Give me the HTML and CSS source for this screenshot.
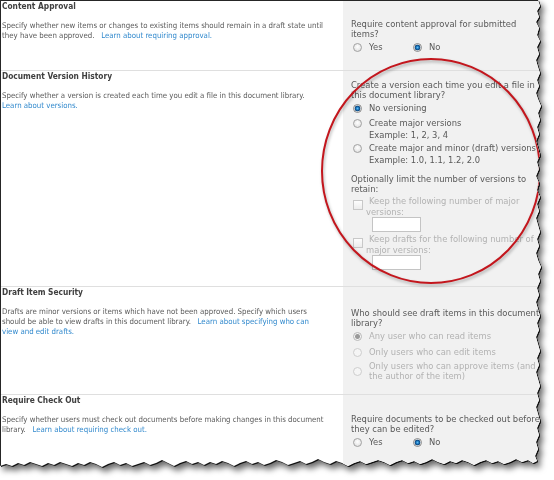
FILE: index.html
```html
<!DOCTYPE html>
<html lang="en">

<head>
  <meta charset="UTF-8" />
  <title>Versioning Settings</title>
  <link rel="stylesheet" href="styles.css">
</head>

<body>
  <div class="frame">
    <div class="paper">

      <section class="row first">
        <div class="info">
          <h3>Content Approval</h3>
          <p>Specify whether new items or changes to existing items should remain in a draft state until<br>they have been approved. &nbsp; <a href="#">Learn about requiring approval.</a></p>
        </div>
        <div class="ctrl">
          <p class="q">Require content approval for submitted<br>items?</p>
          <div class="yesno">
            <label class="opt"><input type="radio" class="radio" name="approval">Yes</label>
            <label class="opt"><input type="radio" class="radio" name="approval" checked>No</label>
          </div>
        </div>
      </section>

      <section class="row versions">
        <div class="info">
          <h3>Document Version History</h3>
          <p>Specify whether a version is created each time you edit a file in this document library.<br><a href="#">Learn about versions.</a></p>
        </div>
        <div class="ctrl tight">
          <p class="q">Create a version each time you edit a file in<br>this document library?</p>
          <label class="opt"><input type="radio" class="radio" name="ver" checked>No versioning</label>
          <label class="opt"><input type="radio" class="radio" name="ver">Create major versions</label>
          <div class="ex">Example: 1, 2, 3, 4</div>
          <label class="opt"><input type="radio" class="radio" name="ver">Create major and minor (draft) versions</label>
          <div class="ex">Example: 1.0, 1.1, 1.2, 2.0</div>

          <p class="q limit">Optionally limit the number of versions to<br>retain:</p>
          <div class="chk">
            <input type="checkbox" class="box" disabled>
            <div class="chk-text off">
              <div class="first-line">Keep the following number of major</div>
              <div>versions:</div>
              <input type="text" class="field" disabled>
            </div>
          </div>
          <div class="chk">
            <input type="checkbox" class="box" disabled>
            <div class="chk-text off">
              <div class="first-line">Keep drafts for the following number of</div>
              <div>major versions:</div>
              <input type="text" class="field" disabled>
            </div>
          </div>
        </div>
      </section>

      <section class="row drafts">
        <div class="info">
          <h3>Draft Item Security</h3>
          <p>Drafts are minor versions or items which have not been approved. Specify which users<br>should be able to view drafts in this document library. &nbsp; <a href="#">Learn about specifying who can<br>view and edit drafts.</a></p>
        </div>
        <div class="ctrl">
          <p class="q">Who should see draft items in this document<br>library?</p>
          <label class="opt off"><input type="radio" class="radio" name="draft" checked disabled>Any user who can read items</label>
          <label class="opt off"><input type="radio" class="radio" name="draft" disabled>Only users who can edit items</label>
          <label class="opt off"><input type="radio" class="radio" name="draft" disabled><span>Only users who can approve items (and<br>the author of the item)</span></label>
        </div>
      </section>

      <section class="row checkout">
        <div class="info">
          <h3>Require Check Out</h3>
          <p>Specify whether users must check out documents before making changes in this document<br>library. &nbsp; <a href="#">Learn about requiring check out.</a></p>
        </div>
        <div class="ctrl">
          <p class="q">Require documents to be checked out before<br>they can be edited?</p>
          <div class="yesno">
            <label class="opt"><input type="radio" class="radio" name="checkout">Yes</label>
            <label class="opt"><input type="radio" class="radio" name="checkout" checked>No</label>
          </div>
        </div>
      </section>

      <!-- red annotation around the versioning options -->
      <svg class="markup" width="542" height="468" viewBox="0 0 542 468">
        <ellipse cx="430" cy="170" rx="109" ry="112" fill="none" stroke="#c3161d" stroke-width="2" />
      </svg>
    </div>
  </div>
</body>

</html>
```

FILE: styles.css
```css
* {
  box-sizing: border-box;
}

body {
  margin: 0;
  background: #fff;
}

.frame {
  width: 554px;
  height: 480px;
  filter: drop-shadow(1px 1px 0 rgba(0, 0, 0, 0.85)) drop-shadow(3px 4px 3px rgba(0, 0, 0, 0.6));
}

.paper {
  position: relative;
  width: 542px;
  height: 468px;
  background: #fff;
  border-left: 1px solid #262626;
  border-top: 1px solid #262626;
  display: flex;
  flex-direction: column;
  overflow: hidden;
  clip-path: polygon(0 0, 538px 0, 540px 6px, 537px 11px, 539px 17px, 536px 22px, 539px 28px, 537px 35px, 540px 41px, 537px 47px, 539px 54px, 536px 60px, 538px 67px, 540px 73px, 537px 80px, 539px 86px, 536px 93px, 538px 99px, 541px 106px, 538px 113px, 540px 120px, 537px 127px, 539px 134px, 536px 141px, 538px 148px, 540px 155px, 537px 162px, 539px 169px, 536px 176px, 539px 183px, 537px 190px, 540px 197px, 537px 204px, 539px 211px, 536px 218px, 538px 225px, 540px 232px, 537px 239px, 539px 246px, 536px 253px, 538px 260px, 541px 267px, 538px 274px, 540px 281px, 537px 288px, 539px 295px, 536px 302px, 538px 309px, 540px 316px, 537px 323px, 539px 330px, 536px 337px, 538px 344px, 540px 351px, 537px 358px, 539px 365px, 536px 372px, 538px 379px, 540px 386px, 537px 393px, 539px 400px, 536px 407px, 538px 414px, 540px 421px, 537px 428px, 539px 435px, 536px 442px, 538px 449px, 535px 456px, 537px 461px, 533px 463px, 528px 460px, 522px 462px, 516px 459px, 510px 462px, 504px 464px, 498px 461px, 492px 463px, 486px 460px, 480px 462px, 474px 465px, 468px 462px, 462px 460px, 456px 463px, 450px 461px, 444px 464px, 438px 462px, 432px 459px, 426px 462px, 420px 464px, 414px 461px, 408px 463px, 402px 460px, 396px 462px, 390px 465px, 384px 462px, 378px 460px, 372px 462px, 366px 464px, 360px 461px, 354px 463px, 348px 466px, 342px 463px, 336px 461px, 330px 464px, 324px 462px, 318px 459px, 312px 462px, 306px 464px, 300px 461px, 294px 463px, 288px 465px, 282px 462px, 276px 460px, 270px 463px, 264px 465px, 258px 462px, 252px 464px, 246px 461px, 240px 463px, 234px 466px, 228px 463px, 222px 461px, 216px 464px, 210px 462px, 204px 465px, 198px 462px, 192px 464px, 186px 461px, 180px 463px, 174px 466px, 168px 463px, 162px 460px, 156px 463px, 150px 465px, 144px 462px, 138px 464px, 132px 466px, 126px 463px, 120px 465px, 114px 462px, 108px 464px, 102px 467px, 96px 464px, 90px 462px, 84px 465px, 78px 463px, 72px 466px, 66px 464px, 60px 462px, 54px 465px, 48px 463px, 42px 466px, 36px 464px, 30px 462px, 24px 465px, 18px 463px, 12px 466px, 6px 464px, 0 466px);
}

.row {
  display: grid;
  grid-template-columns: 342px 1fr;
  border-top: 1px solid #dfdfdf;
  flex: none;
}

.row.first {
  border-top: 0;
  height: 69px;
}

.row.versions {
  height: 216px;
}

.row.drafts {
  height: 108px;
}

.row.checkout {
  flex: 1;
}

.info {
  padding: 0 2px 0 1px;
  font-family: "DejaVu Sans", sans-serif;
  font-stretch: condensed;
  color: #5a5a5a;
  white-space: nowrap;
}

.info h3 {
  margin: 0;
  font-size: 8.3px;
  line-height: 11px;
  font-weight: bold;
  color: #404040;
}

.info p {
  margin: 9px 0 0;
  font-size: 7.8px;
  line-height: 10px;
}

.info a {
  color: #3189cd;
  text-decoration: none;
}

.ctrl {
  background: #f1f1f1;
  padding: 20px 0 0 8px;
  font-family: "DejaVu Sans", sans-serif;
  font-size: 8.4px;
  color: #585858;
  white-space: nowrap;
}

.first .ctrl {
  padding-top: 19px;
}

.ctrl.tight {
  padding-top: 10px;
}

.drafts .ctrl {
  padding-top: 22px;
}

.q {
  margin: 0;
  line-height: 9.5px;
}

.q.limit {
  margin-top: 10px;
}

.opt {
  display: flex;
  align-items: center;
  min-height: 14px;
  margin-top: 1px;
  line-height: 10px;
}

.drafts .opt + .opt {
  margin-top: 2px;
}

.yesno {
  display: flex;
}

.yesno .opt:first-child {
  width: 60px;
}

.radio {
  appearance: none;
  flex: none;
  width: 9px;
  height: 9px;
  margin: 0 7px 0 2px;
  border: 1px solid #a2a2a2;
  border-radius: 50%;
  background: radial-gradient(circle at 50% 40%, #fff, #dadada);
}

.radio:checked {
  border-color: #8a8a8a;
  background: radial-gradient(circle, #5bbcf4 0, #1670b8 1.6px, #0c3f70 2.6px, #f3f3f3 3.2px, #d6d6d6 100%);
}

.radio:disabled {
  border-color: #cdcdcd;
  background: #f5f5f5;
}

.radio:disabled:checked {
  border-color: #b8b8b8;
  background: radial-gradient(circle, #9a9a9a 0, #9a9a9a 2px, #f5f5f5 3px);
}

.off {
  color: #b2b2b2;
}

.ex {
  padding-left: 18px;
  line-height: 10px;
}

.chk {
  display: flex;
  margin-top: 2px;
}

.box {
  appearance: none;
  flex: none;
  width: 10px;
  height: 10px;
  margin: 4px 3px 0 2px;
  border: 1px solid #c8c8c8;
  background: linear-gradient(#fdfdfd, #ececec);
}

.chk-text {
  line-height: 10.5px;
}

.first-line {
  text-indent: 3px;
}

.field {
  display: block;
  width: 49px;
  height: 15px;
  margin: 0 0 0 6px;
  padding: 0;
  border: 1px solid #c4c4c4;
  background: #fff;
}

.markup {
  position: absolute;
  top: 0;
  left: 0;
  pointer-events: none;
  filter: drop-shadow(1px 2px 1.5px rgba(0, 0, 0, 0.3));
}
```
